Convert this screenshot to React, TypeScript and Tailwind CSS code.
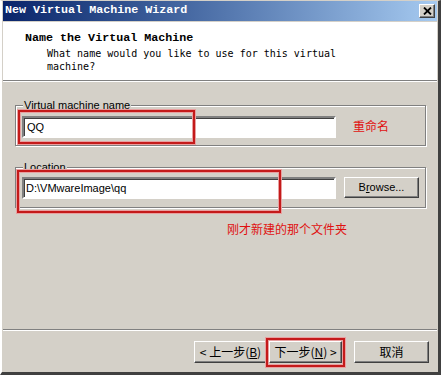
const ui = "font-['Liberation_Sans','Noto_Sans_CJK_SC',sans-serif]";
const cjk = "font-['Noto_Sans_CJK_SC',sans-serif]";
const mono = "font-['Liberation_Mono','DejaVu_Sans_Mono',monospace]";

const raised =
  "border border-t-white border-l-white border-r-[#404040] border-b-[#404040] shadow-[inset_-1px_-1px_0_#808080] bg-[#d4d0c8]";
const sunken =
  "border-2 border-t-[#808080] border-l-[#808080] border-r-white border-b-white shadow-[inset_1px_1px_0_#404040] bg-white";

function Group({ label, children }: { label: string; children: React.ReactNode }) {
  return (
    <div className="relative h-[41px] border border-[#808080] shadow-[inset_1px_1px_0_#fff,1px_1px_0_#fff]">
      <span className={`absolute -top-[7px] left-[7px] bg-[#d4d0c8] px-[1px] text-[11px] leading-[13px] text-black ${ui}`}>
        {label}
      </span>
      {children}
    </div>
  );
}

function RedBox({ className }: { className: string }) {
  return (
    <div
      className={`pointer-events-none absolute border-2 border-[#c41a1a] shadow-[0_0_0_1px_#e8a0a0,inset_0_0_0_1px_#e8a0a0] ${className}`}
    />
  );
}

export default function App() {
  return (
    <div className="relative flex h-[375px] w-[441px] flex-col border-t border-l-2 border-r-[3px] border-b-[3px] border-t-[#d4d0c8] border-l-white border-r-[#404040] border-b-[#404040] bg-[#d4d0c8] pl-[1px] pr-[1px]">
      {/* title bar */}
      <div className="flex h-[20px] items-center justify-between bg-gradient-to-r from-[#0a246a] to-[#a6caf0] pl-[2px] pr-[2px]">
        <span className={`text-[11.7px] font-bold leading-none text-white ${mono}`}>New Virtual Machine Wizard</span>
        <div className={`flex h-[14px] w-[16px] items-center justify-center ${raised}`}>
          <svg width="9" height="8" viewBox="0 0 9 8">
            <path d="M1 0.5 L8 7.5 M8 0.5 L1 7.5" stroke="#000" strokeWidth="1.8" />
          </svg>
        </div>
      </div>

      {/* header */}
      <div className="mt-[1px] h-[58px] bg-white pl-[22px] pt-[9px]">
        <div className={`text-[11.7px] font-bold leading-[14px] text-black ${mono}`}>Name the Virtual Machine</div>
        <div className={`mt-[2px] pl-[22px] text-[10px] leading-[13px] text-black font-['DejaVu_Sans_Mono',monospace]`}>
          What name would you like to use for this virtual
          <br />
          machine?
        </div>
      </div>
      <div className="h-[2px] border-t border-b border-t-[#808080] border-b-white" />

      {/* body */}
      <div className="flex flex-1 flex-col pl-[12px] pr-[11px]">
        <div className="mt-[23px]">
          <Group label="Virtual machine name">
            <div className="flex items-start pl-[6px] pt-[10px]">
              <div className={`flex h-[22px] w-[314px] items-center pl-[3px] text-[11px] text-black ${ui} ${sunken}`}>QQ</div>
              <span className={`ml-[17px] mt-[2px] text-[12px] leading-[16px] text-[#e01010] ${cjk}`}>重命名</span>
            </div>
          </Group>
        </div>
        <div className="mt-[21px]">
          <Group label="Location">
            <div className="flex items-start pl-[6px] pt-[9px]">
              <div className={`flex h-[22px] w-[314px] items-center pl-[2px] text-[11px] text-black ${ui} ${sunken}`}>
                D:\VMwareImage\qq
              </div>
              <button className={`ml-[8px] h-[21px] w-[75px] text-[11px] text-black ${ui} ${raised}`}>
                B<span className="underline">r</span>owse...
              </button>
            </div>
          </Group>
        </div>
        <div className={`ml-[212px] mt-[13px] text-[12px] leading-[16px] text-[#e01010] ${cjk}`}>刚才新建的那个文件夹</div>
      </div>

      {/* footer */}
      <div className="h-[2px] border-t border-b border-t-[#808080] border-b-white" />
      <div className={`flex justify-end pt-[10px] pb-[9px] pr-[8px] text-[12px] text-black ${cjk}`}>
        <button className={`h-[22px] w-[73px] leading-none ${raised}`}>
          &lt; 上一步(<span className="underline">B</span>)
        </button>
        <button className={`ml-[2px] h-[22px] w-[73px] leading-none ${raised}`}>
          下一步(<span className="underline">N</span>) &gt;
        </button>
        <button className={`ml-[12px] h-[22px] w-[75px] leading-none ${raised}`}>取消</button>
      </div>

      {/* annotations */}
      <RedBox className="left-[16px] top-[109px] h-[34px] w-[177px]" />
      <RedBox className="left-[15px] top-[169px] h-[43px] w-[264px]" />
      <RedBox className="left-[264px] top-[337px] h-[29px] w-[79px]" />
    </div>
  );
}
